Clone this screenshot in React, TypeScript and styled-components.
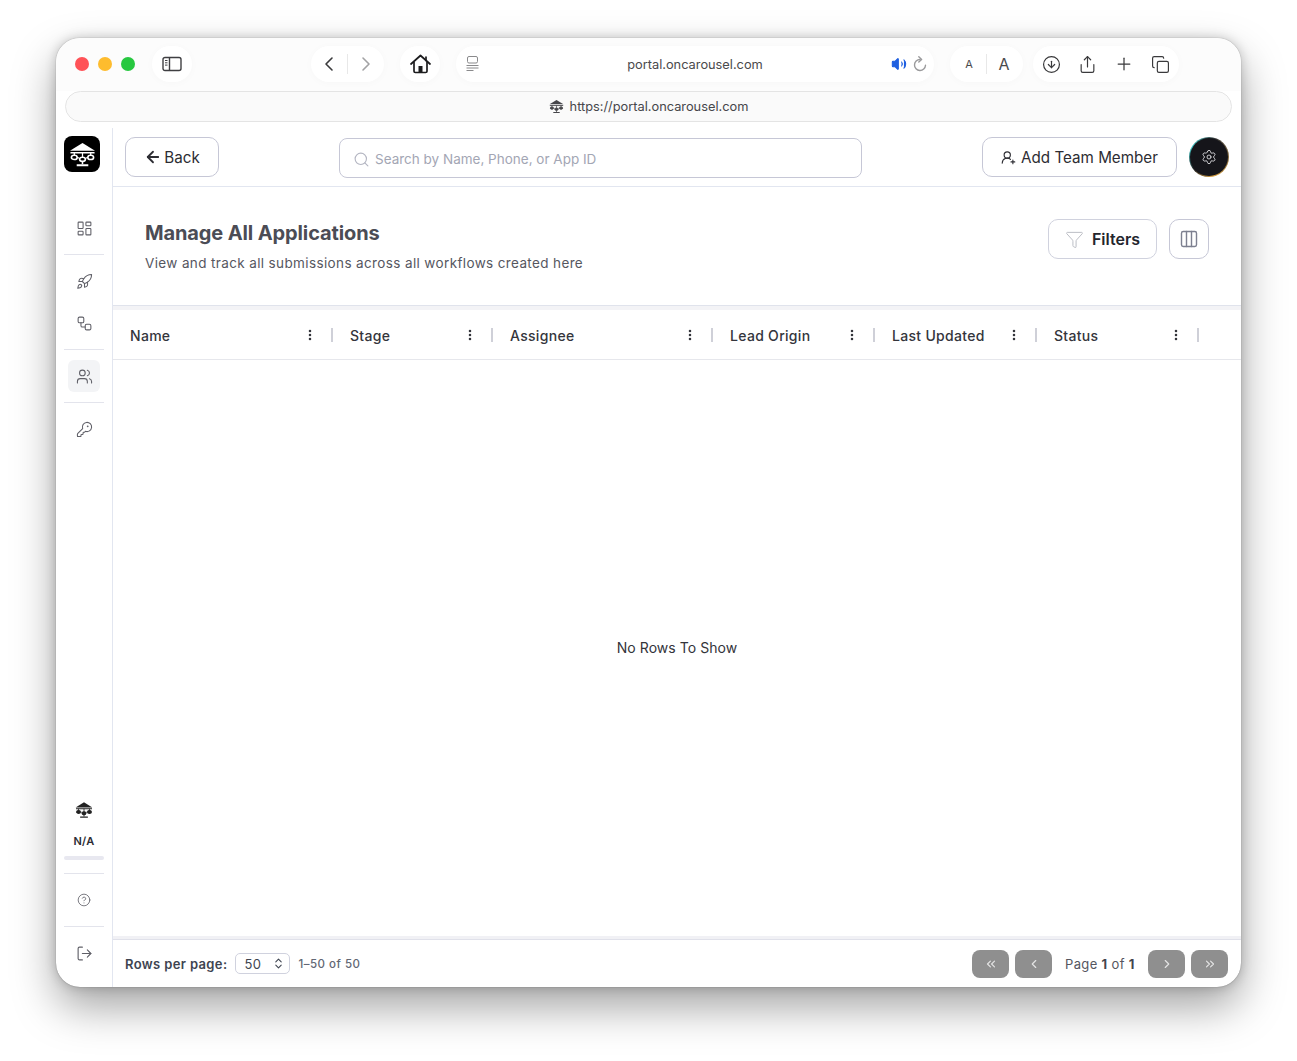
import React from 'react'
import styled, { createGlobalStyle } from 'styled-components'
import {
  ArrowLeft,
  ChevronLeft,
  ChevronRight,
  ChevronsLeft,
  ChevronsRight,
  ChevronsUpDown,
  CircleArrowDown,
  CircleHelp,
  Columns3,
  Copy,
  EllipsisVertical,
  Funnel,
  KeyRound,
  LayoutDashboard,
  LogOut,
  Plus,
  Rocket,
  Search,
  Settings,
  Share,
  UserRoundPlus,
  Users,
  Volume2,
  Workflow,
} from 'lucide-react'

const GlobalStyle = createGlobalStyle`
  html, body {
    margin: 0;
    padding: 0;
    background: #fff;
  }
  * {
    box-sizing: border-box;
  }
  body {
    font-family: Inter, "Liberation Sans", sans-serif;
  }
`

const Stage = styled.div`
  width: 1297px;
  height: 1061px;
  padding: 38px 56px 74px;
  background: #fff;
`

const Window = styled.div`
  height: 949px;
  display: flex;
  flex-direction: column;
  background: #fff;
  border-radius: 24px;
  overflow: hidden;
  box-shadow: 0 20px 44px rgba(0, 0, 0, 0.36), 0 0 12px rgba(0, 0, 0, 0.2), 0 0 1px rgba(0, 0, 0, 0.5);
`

const Toolbar = styled.div`
  height: 53px;
  flex: none;
  display: flex;
  align-items: flex-start;
  padding: 8px 0 0 19px;
  background: #fcfcfc;
`

const Lights = styled.div`
  display: flex;
  align-items: center;
  gap: 9px;
  height: 36px;
  margin-right: 17px;
`

const Light = styled.span<{ $color: string }>`
  width: 14px;
  height: 14px;
  border-radius: 50%;
  background: ${({ $color }) => $color};
`

const Pill = styled.div<{ $width: number; $gap?: number }>`
  width: ${({ $width }) => $width}px;
  height: 36px;
  flex: none;
  display: flex;
  align-items: center;
  justify-content: center;
  margin-right: ${({ $gap }) => $gap ?? 16}px;
  background: #fff;
  border-radius: 18px;
  box-shadow: 0 1px 8px rgba(0, 0, 0, 0.025);
  color: #3a3a3c;
`

const PillDivider = styled.span<{ $space: number }>`
  width: 1px;
  height: 20px;
  background: #e8e8e8;
  margin: 0 ${({ $space }) => $space}px;
`

const AddressPill = styled(Pill)`
  position: relative;
  font-size: 12.8px;
  color: #4a4a4c;
`

const ReaderIcon = styled.span`
  position: absolute;
  left: 10px;
  top: 10px;
  display: flex;
  color: #8a8a8c;
`

const AddressActions = styled.span`
  position: absolute;
  right: 7px;
  top: 10px;
  display: flex;
  align-items: center;
  gap: 6px;
`

const FontLetter = styled.span<{ $size: number }>`
  font-size: ${({ $size }) => $size}px;
  color: #4a4a4c;
  width: 12px;
  text-align: center;
`

const ActionRow = styled(Pill)`
  justify-content: space-between;
  padding: 0 9px;
`

const TabBar = styled.div`
  height: 31px;
  flex: none;
  margin: 0 9px;
  display: flex;
  align-items: center;
  justify-content: center;
  gap: 6px;
  background: #fafafa;
  border: 1.5px solid #e4e4e4;
  border-radius: 16px;
  font-size: 12.8px;
  color: #46464a;
`

const Shell = styled.div`
  flex: 1;
  min-height: 0;
  margin-top: 6px;
  display: flex;
`

const Sidebar = styled.aside`
  width: 57px;
  flex: none;
  display: flex;
  flex-direction: column;
  align-items: center;
  padding: 8px 8px 18px;
  border-right: 1px solid #e2e6f0;
`

const LogoTile = styled.div`
  width: 36px;
  height: 36px;
  flex: none;
  align-self: flex-start;
  margin-bottom: 40px;
  background: #000;
  border-radius: 8px;
  color: #fff;
  display: flex;
  align-items: center;
  justify-content: center;
`

const NavItem = styled.div<{ $active?: boolean }>`
  width: 32px;
  height: 32px;
  flex: none;
  display: flex;
  align-items: center;
  justify-content: center;
  border-radius: 6px;
  color: #5f5f67;
  background: ${({ $active }) => ($active ? '#f3f4f6' : 'transparent')};
`

const NavRule = styled.div`
  width: 40px;
  height: 1px;
  flex: none;
  margin: 10px 0;
  background: #e3e4ec;
`

const NavStack = styled.div`
  display: flex;
  flex-direction: column;
  align-items: center;
  gap: 10px;
`

const Spacer = styled.div`
  flex: 1;
`

const OrgMark = styled.div`
  display: flex;
  color: #222;
`

const OrgName = styled.div`
  margin-top: 15px;
  font-size: 11px;
  font-weight: 600;
  letter-spacing: 0.3px;
  color: #2c2c34;
`

const OrgBar = styled.div`
  width: 40px;
  height: 4px;
  flex: none;
  margin-top: 8px;
  margin-bottom: 3px;
  border-radius: 2px;
  background: #e8e8f0;
`

const Main = styled.main`
  flex: 1;
  min-width: 0;
  display: flex;
  flex-direction: column;
`

const TopBar = styled.header`
  height: 59px;
  flex: none;
  display: flex;
  align-items: flex-start;
  padding: 9px 12px 0;
  border-bottom: 1px solid #e2e6f0;
`

const OutlineButton = styled.button`
  height: 40px;
  display: flex;
  align-items: center;
  justify-content: center;
  background: #fff;
  border: 1px solid #c6c7d6;
  border-radius: 10px;
  font-family: inherit;
  font-size: 15.2px;
  color: #2d2d33;
  padding: 0;
`

const BackButton = styled(OutlineButton)`
  width: 94px;
  gap: 2px;
`

const SearchBox = styled.div`
  width: 523px;
  height: 40px;
  margin: 1px 120px 0;
  display: flex;
  align-items: center;
  gap: 5px;
  padding: 2px 13px 0;
  border: 1px solid #c6c7d6;
  border-radius: 8px;
  font-size: 13.5px;
  color: #a3a6b4;
`

const AddButton = styled(OutlineButton)`
  width: 195px;
  gap: 5px;
  margin-right: 12px;
`

const GearButton = styled.div`
  width: 40px;
  height: 40px;
  display: flex;
  align-items: center;
  justify-content: center;
  border-radius: 50%;
  border: 1.5px solid transparent;
  background: linear-gradient(#15151a, #15151a) padding-box,
    conic-gradient(from 20deg, #3a3a3a, #d8a040 150deg, #222 210deg, #40c8c8 280deg, #3a3a3a) border-box;
  color: #e4e4e8;
`

const TitleRow = styled.section`
  height: 118px;
  flex: none;
  display: flex;
  align-items: flex-start;
  justify-content: space-between;
  padding: 32px 32px 0;
`

const TitleBlock = styled.div`
  display: flex;
  flex-direction: column;
`

const Title = styled.h1`
  margin: 0;
  font-size: 20px;
  line-height: 28px;
  font-weight: 700;
  letter-spacing: -0.12px;
  color: #4b4c55;
`

const Subtitle = styled.p`
  margin: 6px 0 0;
  font-size: 13.5px;
  line-height: 20px;
  letter-spacing: 0.37px;
  color: #56575f;
`

const TitleActions = styled.div`
  display: flex;
  gap: 12px;
`

const FilterButton = styled(OutlineButton)`
  width: 109px;
  gap: 8px;
  font-size: 16px;
  font-weight: 600;
  color: #24252d;
  border-color: #d0d2de;
`

const ColumnsButton = styled(OutlineButton)`
  width: 40px;
  color: #7d8090;
`

const TableTopBand = styled.div`
  height: 5px;
  flex: none;
  background: #f3f3f6;
  border-top: 1px solid #e0e3ec;
`

const TableBottomBand = styled.div`
  height: 4px;
  flex: none;
  background: #f1f1f5;
  border-bottom: 1px solid #e0e1ea;
`

const HeaderRow = styled.div`
  height: 50px;
  flex: none;
  display: flex;
  border-bottom: 1px solid #e6e7ec;
`

const HeaderCell = styled.div<{ $width: number }>`
  width: ${({ $width }) => $width}px;
  flex: none;
  display: flex;
  align-items: center;
  padding: 2px 0 0 17px;
  position: relative;
  font-size: 14px;
  font-weight: 450;
  letter-spacing: 0.3px;
  color: #34353c;
`

const CellMenu = styled.span`
  position: absolute;
  right: 16px;
  top: 18px;
  display: flex;
  color: #33343a;
`

const CellEdge = styled.span`
  position: absolute;
  right: 0;
  top: 18px;
  width: 2px;
  height: 14px;
  background: #cfd0d8;
`

const TableBody = styled.div`
  flex: 1;
  display: flex;
  align-items: center;
  justify-content: center;
  padding-bottom: 2px;
  font-size: 14px;
  letter-spacing: 0.05px;
  color: #33343a;
`

const Footer = styled.footer`
  height: 47px;
  flex: none;
  display: flex;
  align-items: center;
  padding: 0 13px 0 12px;
`

const RowsLabel = styled.span`
  font-size: 13px;
  font-weight: 600;
  letter-spacing: 0.37px;
  color: #3e4450;
`

const RowsSelect = styled.div`
  width: 55px;
  height: 21px;
  margin: 0 8px;
  display: flex;
  align-items: center;
  justify-content: space-between;
  padding: 0 4px 0 8px;
  border: 1px solid #d0d2de;
  border-radius: 5px;
  font-size: 13px;
  letter-spacing: 0.3px;
  color: #3e4450;
`

const RowsRange = styled.span`
  font-size: 11.5px;
  font-weight: 500;
  letter-spacing: 0.5px;
  color: #626774;
`

const PageButton = styled.div<{ $gap?: number }>`
  width: 37px;
  height: 28px;
  display: flex;
  align-items: center;
  justify-content: center;
  margin-left: ${({ $gap }) => $gap ?? 6}px;
  border-radius: 8px;
  background: #8f8f8f;
  color: #e4e4e4;
`

const PageText = styled.span`
  margin-left: 13px;
  margin-right: 13px;
  width: 70px;
  font-size: 13px;
  letter-spacing: 0.35px;
  white-space: nowrap;
  color: #555660;

  b {
    font-weight: 700;
    color: #44454e;
  }
`

const SidebarToggle = () => (
  <svg width="20" height="16" viewBox="0 0 20 16" fill="none" stroke="#3f3f42" strokeWidth="1.4">
    <rect x="1" y="1.5" width="18" height="13" rx="2" />
    <path d="M7.5 1.5v13" />
    <path d="M3 4.5h2.5M3 6.8h2.5M3 9.1h2.5" strokeWidth="1" />
  </svg>
)

const ReaderGlyph = () => (
  <svg width="13" height="15" viewBox="0 0 13 15" fill="none" stroke="currentColor" strokeWidth="1">
    <rect x="1.5" y="0.5" width="10" height="6.5" rx="1.5" />
    <path d="M0.5 9.5h12M0.5 12h12M0.5 14.5h7" />
  </svg>
)

const HomeGlyph = () => (
  <svg width="21" height="20" viewBox="0 0 21 20" fill="none" stroke="#1c1c1e" strokeWidth="1.7" strokeLinejoin="round">
    <path d="M1 10 L10.5 1.5 L20 10" strokeLinecap="round" />
    <path d="M16 3v3.5" strokeLinecap="round" />
    <path d="M4 8v9.2a1.3 1.3 0 0 0 1.3 1.3h10.4a1.3 1.3 0 0 0 1.3-1.3V8" />
    <rect x="8.5" y="12" width="4" height="6.5" fill="#1c1c1e" stroke="none" />
  </svg>
)

const ReloadGlyph = () => (
  <svg width="14" height="16" viewBox="0 0 14 16" fill="none" stroke="#9a9a9c" strokeWidth="1.4" strokeLinecap="round">
    <path d="M7 3.5a5.5 5.5 0 1 0 5.5 5.8" />
    <path d="M5.8 0.8 8.6 3.5 5.8 6" strokeLinejoin="round" />
  </svg>
)

// carousel mark, used in the tile, the tab bar and the sidebar footer
const CarouselMark = ({ size, solid }: { size: number; solid?: boolean }) => (
  <svg width={size} height={size} viewBox="0 0 28 28" fill="none" stroke="currentColor">
    <path d="M14 2 L27 10 H1 Z" fill="currentColor" stroke="none" />
    <path d="M1.5 12.2h25" strokeWidth="1.6" />
    <path d="M5.5 12v3M14 12v5M22.5 12v3" strokeWidth="1.3" />
    <ellipse cx="5.5" cy="17" rx="3" ry="2.2" strokeWidth="1.7" fill={solid ? 'currentColor' : 'none'} />
    <ellipse cx="14" cy="19" rx="3" ry="2.2" strokeWidth="1.7" fill={solid ? 'currentColor' : 'none'} />
    <ellipse cx="22.5" cy="17" rx="3" ry="2.2" strokeWidth="1.7" fill={solid ? 'currentColor' : 'none'} />
    <path d="M9 17.5h1.5M17.5 17.5h1.5" strokeWidth="1.3" />
    <path d="M14 21v3" strokeWidth="1.6" />
    <path d="M8 25.2h12" strokeWidth="2" />
  </svg>
)

const columns = [
  { label: 'Name', width: 220 },
  { label: 'Stage', width: 160 },
  { label: 'Assignee', width: 220 },
  { label: 'Lead Origin', width: 162 },
  { label: 'Last Updated', width: 162 },
  { label: 'Status', width: 162 },
]

const App = () => {
  return (
    <Stage>
      <GlobalStyle />
      <Window>
        <Toolbar>
          <Lights>
            <Light $color="#ff5257" />
            <Light $color="#febc2e" />
            <Light $color="#27c840" />
          </Lights>
          <Pill $width={40} $gap={119}>
            <SidebarToggle />
          </Pill>
          <Pill $width={73}>
            <ChevronLeft size={24} strokeWidth={1.6} color="#3a3a3c" />
            <PillDivider $space={6} />
            <ChevronRight size={24} strokeWidth={1.6} color="#a2a2a4" />
          </Pill>
          <Pill $width={40}>
            <HomeGlyph />
          </Pill>
          <AddressPill $width={478}>
            <ReaderIcon>
              <ReaderGlyph />
            </ReaderIcon>
            portal.oncarousel.com
            <AddressActions>
              <Volume2 size={16} color="#1f5fe0" fill="#1f5fe0" strokeWidth={1.6} />
              <ReloadGlyph />
            </AddressActions>
          </AddressPill>
          <Pill $width={73} $gap={10}>
            <FontLetter $size={11}>A</FontLetter>
            <PillDivider $space={11} />
            <FontLetter $size={16}>A</FontLetter>
          </Pill>
          <ActionRow $width={146}>
            <CircleArrowDown size={19} strokeWidth={1.5} />
            <Share size={19} strokeWidth={1.5} />
            <Plus size={20} strokeWidth={1.5} />
            <Copy size={19} strokeWidth={1.5} />
          </ActionRow>
        </Toolbar>
        <TabBar>
          <CarouselMark size={15} solid />
          https://portal.oncarousel.com
        </TabBar>
        <Shell>
          <Sidebar>
            <LogoTile>
              <CarouselMark size={27} />
            </LogoTile>
            <NavItem>
              <LayoutDashboard size={17} strokeWidth={1.5} />
            </NavItem>
            <NavRule />
            <NavStack>
              <NavItem>
                <Rocket size={17} strokeWidth={1.5} />
              </NavItem>
              <NavItem>
                <Workflow size={17} strokeWidth={1.5} />
              </NavItem>
            </NavStack>
            <NavRule />
            <NavItem $active>
              <Users size={17} strokeWidth={1.5} />
            </NavItem>
            <NavRule />
            <NavItem>
              <KeyRound size={17} strokeWidth={1.5} />
            </NavItem>
            <Spacer />
            <OrgMark>
              <CarouselMark size={18} solid />
            </OrgMark>
            <OrgName>N/A</OrgName>
            <OrgBar />
            <NavRule />
            <NavItem>
              <CircleHelp size={14} strokeWidth={1.4} />
            </NavItem>
            <NavRule />
            <NavItem>
              <LogOut size={17} strokeWidth={1.6} />
            </NavItem>
          </Sidebar>
          <Main>
            <TopBar>
              <BackButton>
                <ArrowLeft size={18} strokeWidth={2.4} />
                Back
              </BackButton>
              <SearchBox>
                <Search size={17} strokeWidth={1.6} color="#b4b6c2" />
                Search by Name, Phone, or App ID
              </SearchBox>
              <AddButton>
                <UserRoundPlus size={15} strokeWidth={1.8} />
                Add Team Member
              </AddButton>
              <GearButton>
                <Settings size={16} strokeWidth={1.3} />
              </GearButton>
            </TopBar>
            <TitleRow>
              <TitleBlock>
                <Title>Manage All Applications</Title>
                <Subtitle>View and track all submissions across all workflows created here</Subtitle>
              </TitleBlock>
              <TitleActions>
                <FilterButton>
                  <Funnel size={19} strokeWidth={1.2} color="#b8bac2" />
                  Filters
                </FilterButton>
                <ColumnsButton>
                  <Columns3 size={20} strokeWidth={1.7} />
                </ColumnsButton>
              </TitleActions>
            </TitleRow>
            <TableTopBand />
            <HeaderRow>
              {columns.map((col) => (
                <HeaderCell key={col.label} $width={col.width}>
                  {col.label}
                  <CellMenu>
                    <EllipsisVertical size={14} strokeWidth={2.4} />
                  </CellMenu>
                  <CellEdge />
                </HeaderCell>
              ))}
            </HeaderRow>
            <TableBody>No Rows To Show</TableBody>
            <TableBottomBand />
            <Footer>
              <RowsLabel>Rows per page:</RowsLabel>
              <RowsSelect>
                50
                <ChevronsUpDown size={13} strokeWidth={2} />
              </RowsSelect>
              <RowsRange>1–50 of 50</RowsRange>
              <Spacer />
              <PageButton>
                <ChevronsLeft size={14} />
              </PageButton>
              <PageButton>
                <ChevronLeft size={14} />
              </PageButton>
              <PageText>
                Page <b>1</b> of <b>1</b>
              </PageText>
              <PageButton $gap={0}>
                <ChevronRight size={14} />
              </PageButton>
              <PageButton>
                <ChevronsRight size={14} />
              </PageButton>
            </Footer>
          </Main>
        </Shell>
      </Window>
    </Stage>
  )
}

export default App
